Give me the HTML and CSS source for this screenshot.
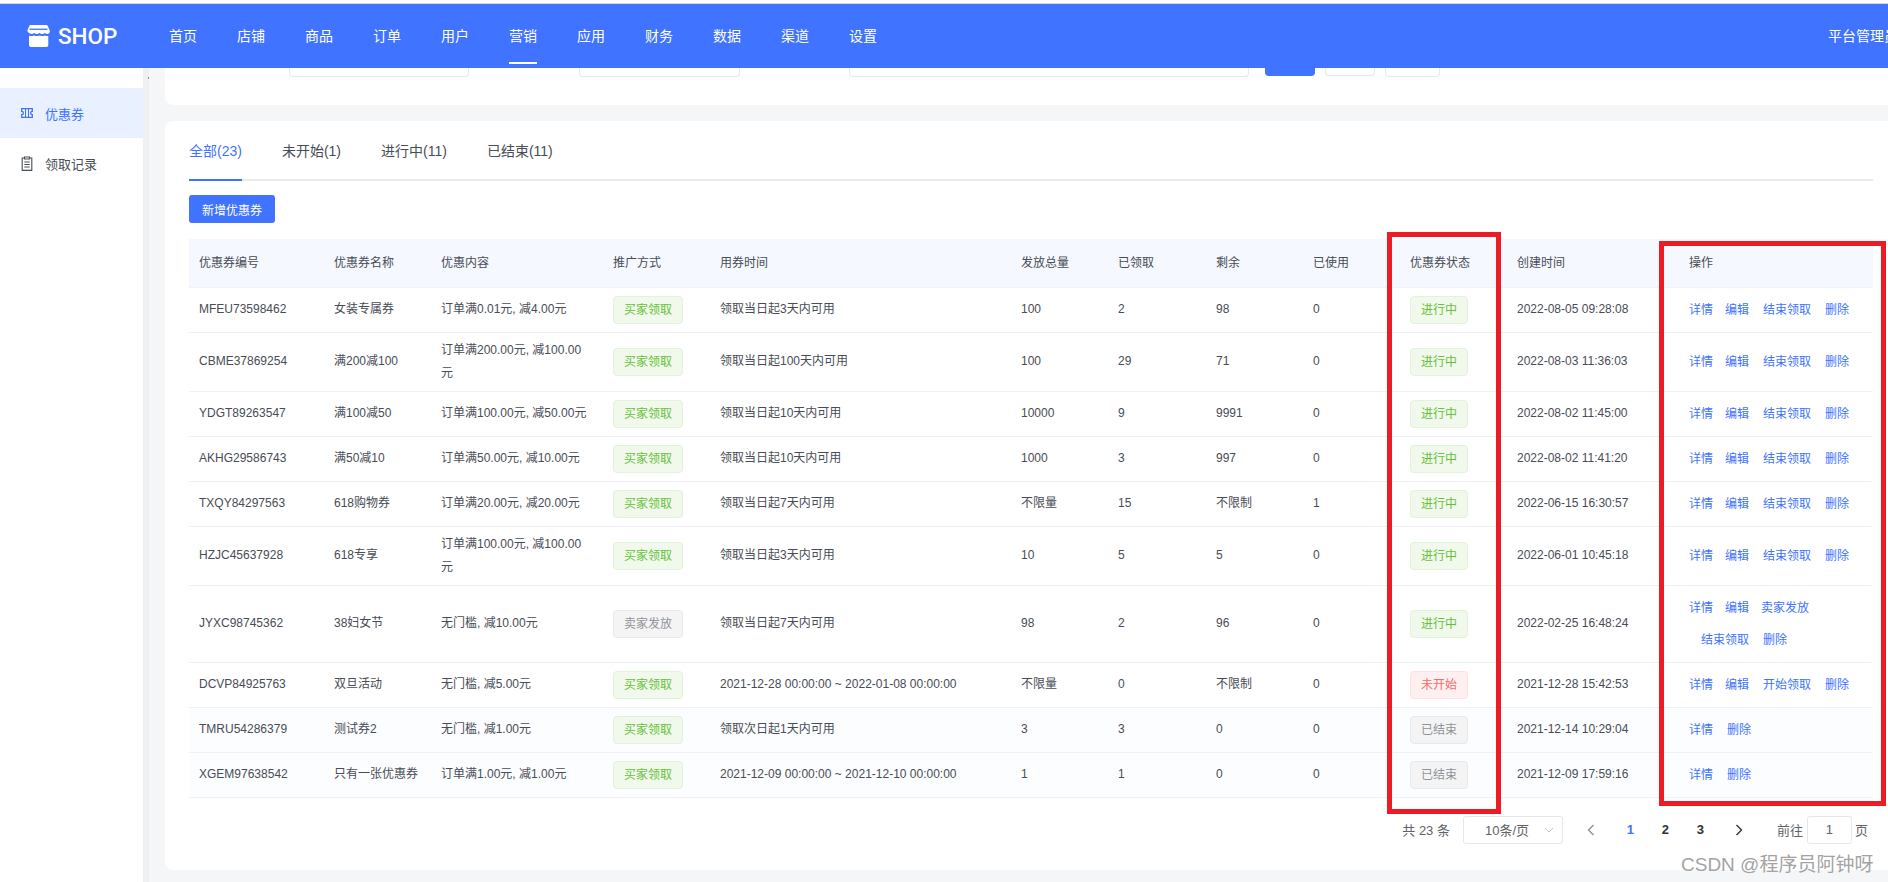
FILE: index.html
```html
<!DOCTYPE html>
<html lang="zh-CN">
<head>
<meta charset="utf-8">
<title>优惠券</title>
<link rel="stylesheet" href="styles.css">
</head>
<body>
<div class="page">
  <div class="top-strip"></div>
  <header class="header">
    <div class="brand">
      <svg class="brand-icon" viewBox="0 0 23 22" width="23" height="22">
        <path fill="#fff" d="M4 0h15c1 0 1.600.5 2 1.400l1.700 4.200c.6 1.700-.5 3.400-2.200 3.400-1.200 0-2-.5-2.600-1.300-.6.800-1.600 1.300-2.700 1.300s-2.100-.5-2.700-1.300c-.6.800-1.600 1.300-2.700 1.300S7.700 8.500 7.100 7.700C6.500 8.500 5.600 9 4.500 9 2.600 9 .4 7.300.4 5.600L2 1.400C2.400.5 3 0 4 0z"/>
        <path fill="#4073ff" d="M2.500 3.600h18v1.300h-18z"/>
        <path fill="#fff" d="M2 10.700c.8.300 1.600.4 2.500.4 1 0 1.900-.2 2.700-.7.800.5 1.700.7 2.700.7 1 0 1.900-.2 2.700-.7.800.5 1.700.7 2.700.7 1 0 1.900-.2 2.700-.7.800.5 1.400.7 2.400.7.300 0 .6 0 .9-.1v9c0 1.100-.9 2-2 2H4c-1.100 0-2-.9-2-2z"/>
      </svg>
      <span class="brand-name">SHOP</span>
    </div>
    <nav class="nav">
      <a class="nav-item">首页</a>
      <a class="nav-item">店铺</a>
      <a class="nav-item">商品</a>
      <a class="nav-item">订单</a>
      <a class="nav-item">用户</a>
      <a class="nav-item nav-active">营销</a>
      <a class="nav-item">应用</a>
      <a class="nav-item">财务</a>
      <a class="nav-item">数据</a>
      <a class="nav-item">渠道</a>
      <a class="nav-item">设置</a>
    </nav>
    <div class="user">平台管理员</div>
  </header>
  <div class="main">
    <aside class="sidebar">
      <a class="side-item side-active">
        <svg class="side-icon" viewBox="0 0 12 12" width="12" height="12">
          <path fill="none" stroke="currentColor" stroke-width="1.300" d="M.7 1.700h10.600v2.600a1.700 1.700 0 0 0 0 3.400v2.600H.7V7.700a1.700 1.700 0 0 0 0-3.400z"/>
          <path fill="none" stroke="currentColor" stroke-width="1" d="M4.500 2v8M7.500 2v8"/>
        </svg>
        <span>优惠券</span>
      </a>
      <a class="side-item">
        <svg class="side-icon" viewBox="0 0 12 15" width="12" height="15">
          <path fill="none" stroke="currentColor" stroke-width="1.100" d="M3.500 2H1.200v12.400h9.600V2H8.500"/>
          <path fill="none" stroke="currentColor" stroke-width="1.100" d="M3.500 1h5v2h-5zM3.300 6h5.400M3.300 8.500h5.400M3.300 11h5.400"/>
        </svg>
        <span>领取记录</span>
      </a>
    </aside>
    <div class="splitter"><i class="splitter-dot"></i></div>
    <main class="content">
      <section class="card card-filter">
        <div class="filter-row">
          <div class="stub stub-a"></div>
          <div class="stub stub-b"></div>
          <div class="stub stub-c"></div>
          <div class="stub stub-btn"></div>
          <div class="stub stub-d"></div>
          <div class="stub stub-e"></div>
        </div>
      </section>
      <section class="card card-list">
        <div class="tabs">
          <a class="tab tab-active">全部(23)</a>
          <a class="tab">未开始(1)</a>
          <a class="tab">进行中(11)</a>
          <a class="tab">已结束(11)</a>
        </div>
        <button class="btn-add">新增优惠券</button>
        <table class="table">
          <colgroup>
            <col class="c1"><col class="c2"><col class="c3"><col class="c4"><col class="c5"><col class="c6"><col class="c7"><col class="c8"><col class="c9"><col class="c10"><col class="c11"><col class="c12">
          </colgroup>
          <thead>
            <tr><th>优惠券编号</th><th>优惠券名称</th><th>优惠内容</th><th>推广方式</th><th>用券时间</th><th>发放总量</th><th>已领取</th><th>剩余</th><th>已使用</th><th>优惠券状态</th><th>创建时间</th><th>操作</th></tr>
          </thead>
          <tbody>
            <tr><td>MFEU73598462</td><td>女装专属券</td><td>订单满0.01元, 减4.00元</td><td><span class="tag tag-green">买家领取</span></td><td>领取当日起3天内可用</td><td>100</td><td>2</td><td>98</td><td>0</td><td><span class="tag tag-green">进行中</span></td><td>2022-08-05 09:28:08</td><td class="ops"><a class="op">详情</a><a class="op">编辑</a><a class="op op-far">结束领取</a><a class="op op-far">删除</a></td></tr>
            <tr><td>CBME37869254</td><td>满200减100</td><td>订单满200.00元, 减100.00元</td><td><span class="tag tag-green">买家领取</span></td><td>领取当日起100天内可用</td><td>100</td><td>29</td><td>71</td><td>0</td><td><span class="tag tag-green">进行中</span></td><td>2022-08-03 11:36:03</td><td class="ops"><a class="op">详情</a><a class="op">编辑</a><a class="op op-far">结束领取</a><a class="op op-far">删除</a></td></tr>
            <tr><td>YDGT89263547</td><td>满100减50</td><td>订单满100.00元, 减50.00元</td><td><span class="tag tag-green">买家领取</span></td><td>领取当日起10天内可用</td><td>10000</td><td>9</td><td>9991</td><td>0</td><td><span class="tag tag-green">进行中</span></td><td>2022-08-02 11:45:00</td><td class="ops"><a class="op">详情</a><a class="op">编辑</a><a class="op op-far">结束领取</a><a class="op op-far">删除</a></td></tr>
            <tr><td>AKHG29586743</td><td>满50减10</td><td>订单满50.00元, 减10.00元</td><td><span class="tag tag-green">买家领取</span></td><td>领取当日起10天内可用</td><td>1000</td><td>3</td><td>997</td><td>0</td><td><span class="tag tag-green">进行中</span></td><td>2022-08-02 11:41:20</td><td class="ops"><a class="op">详情</a><a class="op">编辑</a><a class="op op-far">结束领取</a><a class="op op-far">删除</a></td></tr>
            <tr><td>TXQY84297563</td><td>618购物券</td><td>订单满20.00元, 减20.00元</td><td><span class="tag tag-green">买家领取</span></td><td>领取当日起7天内可用</td><td>不限量</td><td>15</td><td>不限制</td><td>1</td><td><span class="tag tag-green">进行中</span></td><td>2022-06-15 16:30:57</td><td class="ops"><a class="op">详情</a><a class="op">编辑</a><a class="op op-far">结束领取</a><a class="op op-far">删除</a></td></tr>
            <tr><td>HZJC45637928</td><td>618专享</td><td>订单满100.00元, 减100.00元</td><td><span class="tag tag-green">买家领取</span></td><td>领取当日起3天内可用</td><td>10</td><td>5</td><td>5</td><td>0</td><td><span class="tag tag-green">进行中</span></td><td>2022-06-01 10:45:18</td><td class="ops"><a class="op">详情</a><a class="op">编辑</a><a class="op op-far">结束领取</a><a class="op op-far">删除</a></td></tr>
            <tr><td>JYXC98745362</td><td>38妇女节</td><td>无门槛, 减10.00元</td><td><span class="tag tag-gray">卖家发放</span></td><td>领取当日起7天内可用</td><td>98</td><td>2</td><td>96</td><td>0</td><td><span class="tag tag-green">进行中</span></td><td>2022-02-25 16:48:24</td><td class="ops"><a class="op">详情</a><a class="op">编辑</a><a class="op">卖家发放</a><a class="op">结束领取</a><a class="op op-far">删除</a></td></tr>
            <tr><td>DCVP84925763</td><td>双旦活动</td><td>无门槛, 减5.00元</td><td><span class="tag tag-green">买家领取</span></td><td>2021-12-28 00:00:00 ~ 2022-01-08 00:00:00</td><td>不限量</td><td>0</td><td>不限制</td><td>0</td><td><span class="tag tag-red">未开始</span></td><td>2021-12-28 15:42:53</td><td class="ops"><a class="op">详情</a><a class="op">编辑</a><a class="op op-far">开始领取</a><a class="op op-far">删除</a></td></tr>
            <tr class="row-tint"><td>TMRU54286379</td><td>测试券2</td><td>无门槛, 减1.00元</td><td><span class="tag tag-green">买家领取</span></td><td>领取次日起1天内可用</td><td>3</td><td>3</td><td>0</td><td>0</td><td><span class="tag tag-gray">已结束</span></td><td>2021-12-14 10:29:04</td><td class="ops"><a class="op">详情</a><a class="op op-far">删除</a></td></tr>
            <tr class="row-tint"><td>XGEM97638542</td><td>只有一张优惠券</td><td>订单满1.00元, 减1.00元</td><td><span class="tag tag-green">买家领取</span></td><td>2021-12-09 00:00:00 ~ 2021-12-10 00:00:00</td><td>1</td><td>1</td><td>0</td><td>0</td><td><span class="tag tag-gray">已结束</span></td><td>2021-12-09 17:59:16</td><td class="ops"><a class="op">详情</a><a class="op op-far">删除</a></td></tr>
          </tbody>
        </table>
        <div class="pager">
          <span class="pager-total">共 23 条</span>
          <div class="pager-select">
            <span>10条/页</span>
            <svg class="pager-caret" viewBox="0 0 10 6" width="10" height="6"><path fill="none" stroke="#c0c4cc" stroke-width="1" d="M1 1l4 4 4-4"/></svg>
          </div>
          <span class="pager-btn pager-prev"><svg viewBox="0 0 8 12" width="8" height="12"><path fill="none" stroke="#909399" stroke-width="1.400" d="M6.500 1L1.500 6l5 5"/></svg></span>
          <span class="pager-btn pager-current">1</span>
          <span class="pager-btn">2</span>
          <span class="pager-btn">3</span>
          <span class="pager-btn pager-next"><svg viewBox="0 0 8 12" width="8" height="12"><path fill="none" stroke="#303133" stroke-width="1.400" d="M1.500 1l5 5-5 5"/></svg></span>
          <span class="pager-goto">前往</span>
          <div class="pager-input">1</div>
          <span class="pager-unit">页</span>
        </div>
      </section>
    </main>
  </div>
  <div class="mark mark-status"></div>
  <div class="mark mark-ops"></div>
  <div class="watermark">CSDN @程序员阿钟呀</div>
</div>
</body>
</html>
```
FILE: styles.css
```css
* { box-sizing: border-box; }
html, body {
  margin: 0;
  height: 100%;
  overflow: hidden;
  background: #fff;
}
body {
  font-family: "Liberation Sans", "Noto Sans CJK SC", sans-serif;
  font-size: 12px;
  color: #484c55;
}
a { text-decoration: none; color: inherit; }

.page {
  position: relative;
  width: 1888px;
  height: 882px;
  display: flex;
  flex-direction: column;
  overflow: hidden;
}
.top-strip {
  height: 4px;
  flex: none;
  background: #fff;
  border-bottom: 1px solid #d4d6da;
}

.header {
  height: 64px;
  flex: none;
  display: flex;
  align-items: flex-start;
  background: #4073ff;
  color: #fff;
  padding-left: 27px;
}
.brand {
  width: 142px;
  height: 64px;
  flex: none;
  display: flex;
  align-items: center;
  gap: 8px;
}
.brand-icon { flex: none; }
.brand-name {
  font-family: Roboto, "Liberation Sans", sans-serif;
  font-size: 22.5px;
  font-weight: 500;
}
.nav { display: flex; gap: 40px; }
.nav-item {
  height: 60px;
  padding-top: 21px;
  line-height: 22px;
  font-size: 14px;
  border-bottom: 2px solid transparent;
}
.nav-active { border-bottom-color: #fff; }
.user {
  margin-left: auto;
  margin-right: -10px;
  flex: none;
  font-size: 14px;
  line-height: 64px;
}

.main {
  flex: 1;
  min-height: 0;
  display: flex;
}
.sidebar {
  width: 143px;
  flex: none;
  padding-top: 20px;
  background: #fff;
}
.side-item {
  height: 50px;
  display: flex;
  align-items: center;
  padding-left: 21px;
  font-size: 13px;
  color: #484c55;
}
.side-icon { flex: none; margin-right: 12px; }
.side-active { background: #e9f0ff; color: #4073ff; }

.splitter {
  position: relative;
  width: 6px;
  flex: none;
  background: #f0f0f0;
}
.splitter-dot {
  position: absolute;
  top: 9px;
  right: 0;
  width: 1px;
  height: 2px;
  background: #8a8a8a;
}

.content {
  flex: 1;
  min-width: 0;
  overflow: hidden;
  background: #f5f6f8;
  padding-left: 16px;
}
.card {
  width: 1732px;
  background: #fff;
  border-radius: 8px;
}
.card-filter {
  height: 37px;
  border-radius: 0 0 0 8px;
}
.filter-row {
  display: flex;
  align-items: flex-start;
}
.stub {
  height: 9px;
  background: #fff;
  border: 1px solid #e6e8ec;
  border-top: 0;
  border-radius: 0 0 4px 4px;
}
.stub-a { width: 180px; margin-left: 124px; }
.stub-b { width: 161px; margin-left: 110px; }
.stub-c { width: 400px; margin-left: 109px; }
.stub-btn {
  width: 50px;
  height: 8px;
  margin-left: 16px;
  background: #4073ff;
  border-color: #4073ff;
}
.stub-d { width: 50px; height: 8px; margin-left: 10px; }
.stub-e { width: 55px; margin-left: 10px; }

.card-list {
  margin-top: 16px;
  padding: 0 24px 26px;
  border-radius: 8px 0 0 8px;
}
.tabs {
  height: 60px;
  display: flex;
  gap: 40px;
  border-bottom: 2px solid #e9ebef;
}
.tab {
  height: 60px;
  line-height: 60px;
  font-size: 14px;
  color: #484c55;
  border-bottom: 2px solid transparent;
}
.tab-active { color: #4073ff; border-bottom-color: #4073ff; }

.btn-add {
  display: block;
  width: 86px;
  height: 28px;
  margin-top: 14px;
  padding: 0;
  border: 0;
  border-radius: 3px;
  background: #4073ff;
  color: #fff;
  font: inherit;
}

.table {
  width: 1684px;
  margin-top: 16px;
  border-collapse: collapse;
  table-layout: fixed;
}
.c1 { width: 135px; }
.c2 { width: 107px; }
.c3 { width: 172px; }
.c4 { width: 107px; }
.c5 { width: 301px; }
.c6 { width: 97px; }
.c7 { width: 98px; }
.c8 { width: 97px; }
.c9 { width: 97px; }
.c10 { width: 107px; }
.c11 { width: 172px; }
.c12 { width: 194px; }
.table th {
  height: 48px;
  padding: 0 10px 2px;
  text-align: left;
  font-weight: 400;
  background: #f5f8ff;
  border-bottom: 1px solid #f0f2f5;
}
.table td {
  height: 45px;
  padding: 6px 10px;
  line-height: 23px;
  border-bottom: 1px solid #eff1f4;
  vertical-align: middle;
}
.table td:nth-child(3) { padding-right: 12px; }
.row-tint td { background: #fcfdff; }

.tag {
  display: inline-block;
  height: 28px;
  padding: 0 10px;
  line-height: 26px;
  border: 1px solid;
  border-radius: 4px;
  vertical-align: middle;
}
.tag-green { background: #f0f9eb; border-color: #e1f3d8; color: #67c23a; }
.tag-red { background: #fef0f0; border-color: #fde2e2; color: #f56c6c; }
.tag-gray { background: #f4f4f5; border-color: #e9e9eb; color: #909399; }

.table .ops { line-height: 32px; }
.op {
  display: inline-block;
  margin-left: 12px;
  color: #4073ff;
}
.op:first-child { margin-left: 0; }
.op-far { margin-left: 14px; }

.pager {
  height: 28px;
  margin-top: 18px;
  padding-right: 5px;
  width: 1684px;
  display: flex;
  align-items: center;
  justify-content: flex-end;
  font-size: 13px;
  color: #606266;
}
.pager-select {
  width: 100px;
  height: 28px;
  margin-left: 13px;
  padding: 0 8px 0 21px;
  display: flex;
  align-items: center;
  justify-content: space-between;
  border: 1px solid #e4e7ed;
  border-radius: 3px;
}
.pager-btn {
  width: 35px;
  height: 28px;
  display: flex;
  align-items: center;
  justify-content: center;
  font-weight: 700;
  color: #303133;
}
.pager-prev { margin-left: 11px; margin-right: 4px; }
.pager-next { margin-left: 4px; }
.pager-current { color: #4073ff; }
.pager-goto { margin-left: 20px; }
.pager-input {
  width: 45px;
  height: 28px;
  margin-left: 4px;
  line-height: 26px;
  text-align: center;
  border: 1px solid #e4e7ed;
  border-radius: 3px;
}
.pager-unit { margin-left: 3px; }

.mark {
  position: absolute;
  border: 5px solid #ed1c24;
}
.mark-status { left: 1387px; top: 232px; width: 114px; height: 582px; }
.mark-ops { left: 1659px; top: 241px; width: 227px; height: 565px; }
.watermark {
  position: absolute;
  left: 1681px;
  top: 853px;
  font-size: 19px;
  line-height: 24px;
  color: #a3a3a3;
  white-space: nowrap;
}
```
